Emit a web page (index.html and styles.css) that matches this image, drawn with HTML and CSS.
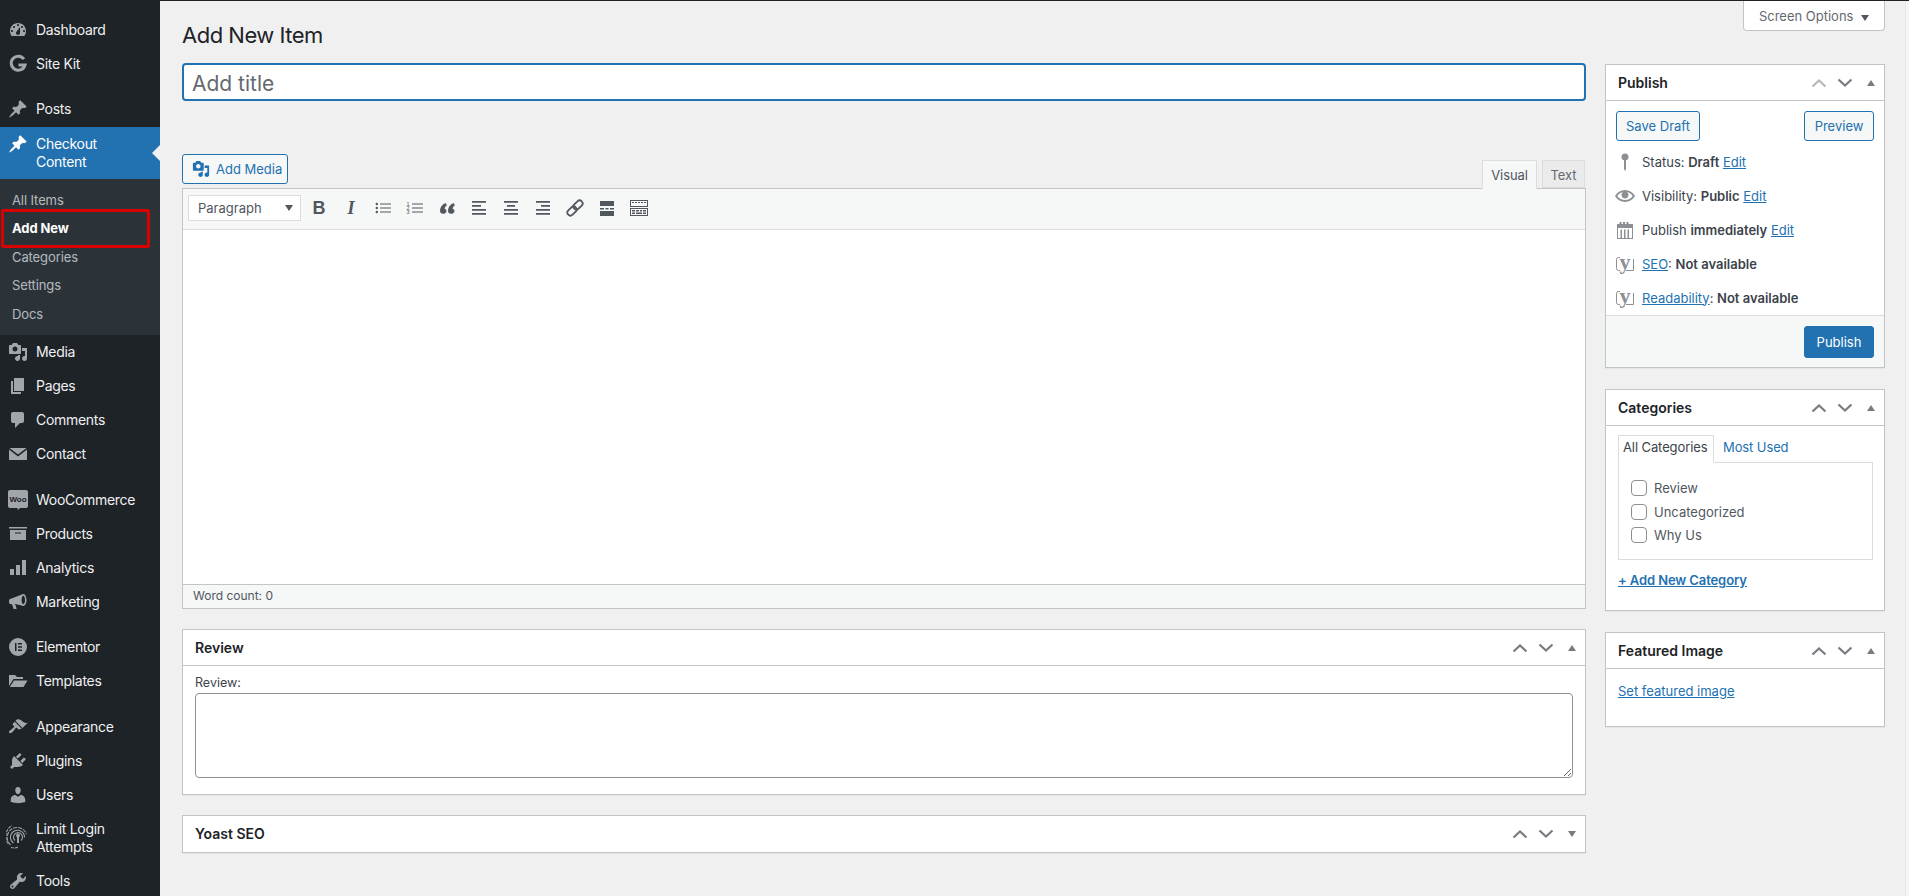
FILE: index.html
```html
<!DOCTYPE html>
<html lang="en">

<head>
    <meta charset="UTF-8">
    <title>Add New Item</title>
    <link rel="stylesheet" href="styles.css">
</head>

<body>
    <svg class="sprite" xmlns="http://www.w3.org/2000/svg">
        <symbol id="i-dashboard" viewBox="0 0 20 20"><path fill-rule="evenodd" d="M3.76 16h12.48c1.1-1.37 1.76-3.11 1.76-5 0-4.42-3.58-8-8-8s-8 3.58-8 8c0 1.89.66 3.63 1.76 5zM10 4c.55 0 1 .45 1 1s-.45 1-1 1-1-.45-1-1 .45-1 1-1zM6 6c.55 0 1 .45 1 1s-.45 1-1 1-1-.45-1-1 .45-1 1-1zm8 0c.55 0 1 .45 1 1s-.45 1-1 1-1-.45-1-1 .45-1 1-1zm-5.37 5.55L12 7v6c0 1.1-.9 2-2 2s-2-.9-2-2c0-.57.24-1.08.63-1.45zM4 10c.55 0 1 .45 1 1s-.45 1-1 1-1-.45-1-1 .45-1 1-1zm12 0c.55 0 1 .45 1 1s-.45 1-1 1-1-.45-1-1 .45-1 1-1z"/></symbol>
        <symbol id="i-google" viewBox="0 0 20 20"><path fill="none" stroke="currentColor" stroke-width="3" d="M16 5.2A7 7 0 1 0 17 11H10.5"/></symbol>
        <symbol id="i-pin" viewBox="0 0 20 20"><path d="M10.44 3.02l1.82-1.82 6.36 6.35-1.83 1.82c-1.05-.68-2.48-.57-3.41.36l-.75.75c-.92.93-1.04 2.35-.35 3.41l-1.83 1.82-2.41-2.41-2.8 2.79c-.42.42-3.38 2.71-3.8 2.29s1.86-3.39 2.28-3.81l2.79-2.79L4.1 9.36l1.83-1.82c1.05.69 2.48.57 3.4-.36l.75-.75c.93-.92 1.05-2.35.36-3.41z"/></symbol>
        <symbol id="i-media" viewBox="0 0 20 20"><path fill-rule="evenodd" d="M13 11V4c0-.55-.45-1-1-1h-1.67L9 1H5L3.67 3H2c-.55 0-1 .45-1 1v7c0 .55.45 1 1 1h10c.55 0 1-.45 1-1zM7 4.5c1.38 0 2.5 1.12 2.5 2.5S8.38 9.5 7 9.5 4.5 8.38 4.5 7 5.62 4.5 7 4.5zM14 6h5v10.5c0 1.38-1.12 2.5-2.5 2.5S14 17.88 14 16.5s1.12-2.5 2.5-2.5c.17 0 .34.02.5.05V9h-3V6zm-4 8.05V13h2v3.5c0 1.38-1.12 2.5-2.5 2.5S7 17.88 7 16.5 8.12 14 9.5 14c.17 0 .34.02.5.05z"/></symbol>
        <symbol id="i-page" viewBox="0 0 20 20"><path d="M6 15V2h10v13H6zm-1 1h8v2H3V5h2v11z"/></symbol>
        <symbol id="i-comment" viewBox="0 0 20 20"><path d="M5 2h9c1.1 0 2 .9 2 2v7c0 1.1-.9 2-2 2h-2l-5 5v-5H5c-1.1 0-2-.9-2-2V4c0-1.1.9-2 2-2z"/></symbol>
        <symbol id="i-mail" viewBox="0 0 20 20"><path d="M1.5 4h17L10 10.5zM1 5.5l9 7 9-7V16H1z"/></symbol>
        <symbol id="i-woo" viewBox="0 0 20 20"><path d="M2 0h16c1.100 0 2 .9 2 2v14c0 1.100-.9 2-2 2h-6l-2 2-.6-2H2c-1.100 0-2-.9-2-2V2c0-1.100.9-2 2-2z"/><text x="10" y="12" class="woo-text">Woo</text></symbol>
        <symbol id="i-archive" viewBox="0 0 20 20"><path fill-rule="evenodd" d="M19 3v1.5H1V3h18zM2 6h16v10H2V6zm11 3.5V8.500H7v1h6z"/></symbol>
        <symbol id="i-chart" viewBox="0 0 20 20"><path d="M18 2v15h-4V2h4zM12 7v10H8V7h4zM6 11v6H2v-6h4z"/></symbol>
        <symbol id="i-megaphone" viewBox="0 0 20 20"><path fill-rule="evenodd" d="M18.500 8c0 3.300-1.400 6-3.200 6-.5 0-1-.2-1.400-.6L7 12v.8c.3 0 .5.2.6.5l1 3.200c.1.300-.1.500-.4.500H6c-.3 0-.5-.2-.6-.4l-1.200-4.200-2-.5C1.500 11.700 1 11 1 10.200V8.800c0-.8.500-1.500 1.200-1.700L13.900 2.600c.4-.4.900-.6 1.400-.6 1.800 0 3.200 2.700 3.200 6zM15.300 3.800c-.9 0-1.700 1.900-1.700 4.200s.8 4.200 1.700 4.200S17 10.300 17 8s-.8-4.200-1.700-4.200z"/></symbol>
        <symbol id="i-elementor" viewBox="0 0 20 20"><path fill-rule="evenodd" d="M10 1a9 9 0 1 1 0 18 9 9 0 0 1 0-18zM7 6v8h1.500V6H7zm3 0v1.500h4V6h-4zm0 3.250v1.500h4v-1.500h-4zM10 12.500V14h4v-1.500h-4z"/></symbol>
        <symbol id="i-folder" viewBox="0 0 20 20"><path d="M1 4h6l2 2h6v2H5.500L1 15V4zM6 9.500h13.500L15.500 16H1.800z"/></symbol>
        <symbol id="i-brush" viewBox="0 0 20 20"><path d="M14.480 11.060L7.410 3.990l1.500-1.500c.5-.56 2.300-.47 3.510.32 1.210.8 1.430 1.280 2.910 2.100 1.180.64 2.450 1.260 4.450.85zm-.71.71L6.700 4.700 4.930 6.470c-.39.39-.39 1.020 0 1.410l1.060 1.060c.39.39.39 1.030 0 1.420-.6.6-1.430 1.110-2.210 1.690-.35.26-.7.53-1.010.84C1.430 13.230.4 14.930 1.300 15.820c.9.900 2.590-.13 3.940-1.480.31-.31.58-.66.85-1.010.58-.78 1.080-1.610 1.690-2.210.39-.39 1.020-.39 1.410 0l1.060 1.060c.39.39 1.020.39 1.410 0z"/></symbol>
        <symbol id="i-plug" viewBox="0 0 20 20"><path d="M13.110 4.360L9.870 7.600 8 5.730l3.240-3.240c.35-.34 1.050-.2 1.560.32.52.51.66 1.210.31 1.550zm-8 1.770l.91-1.120 9.010 9.010-1.190.84c-.71.71-2.630 1.160-3.820 1.160H6.140L4.900 17.260c-.59.59-1.540.59-2.120 0-.59-.58-.59-1.530 0-2.120l1.240-1.240v-3.880c0-1.130.4-3.190 1.090-3.890zm7.260 3.970l3.240-3.240c.34-.35 1.040-.21 1.550.31.52.51.66 1.210.31 1.550l-3.240 3.250z"/></symbol>
        <symbol id="i-user" viewBox="0 0 20 20"><path d="M10 9.250c-2.270 0-2.730-3.440-2.730-3.440C7 4.020 7.820 2 9.970 2c2.160 0 2.980 2.020 2.710 3.810 0 0-.41 3.440-2.680 3.440zm0 2.570L12.720 10c2.390 0 4.520 2.330 4.520 4.530v2.490s-3.650 1.130-7.240 1.130c-3.650 0-7.240-1.130-7.240-1.130v-2.490c0-2.250 1.940-4.480 4.470-4.480z"/></symbol>
        <symbol id="i-limit" viewBox="0 0 22 26"><g fill="none" stroke="currentColor" stroke-width="1.100"><path d="M7.500 20A7 7 0 1 1 18.500 14.500"/><path d="M4.500 22A10 10 0 1 1 20.500 11" stroke-dasharray="4 1"/><path d="M2 20.500A12.500 12.500 0 0 1 6 2.500" stroke-dasharray="3 1"/><path d="M5 24.500c3 .8 5 .6 7-.5" stroke-dasharray="3 1"/><path d="M9 17.500a4.500 4.500 0 1 1 6 0"/></g><path d="M12 10.500a2 2 0 0 1 1 3.700V20h-2v-5.800a2 2 0 0 1 1-3.700z"/></symbol>
        <symbol id="i-tools" viewBox="0 0 20 20"><path fill-rule="evenodd" d="M16.680 9.770c-1.340 1.340-3.300 1.670-4.950.99l-5.410 6.520c-.99.99-2.590.99-3.580 0s-.99-2.590 0-3.570l6.520-5.420c-.68-1.650-.35-3.610.99-4.950 1.280-1.280 3.120-1.620 4.720-1.060l-2.890 2.890 2.820 2.820 2.860-2.870c.53 1.580.18 3.390-1.080 4.650zM3.810 16.210c.4.39 1.040.39 1.430 0 .4-.4.4-1.040 0-1.430-.39-.4-1.030-.4-1.430 0-.39.39-.39 1.030 0 1.430z"/></symbol>
        <symbol id="i-ul" viewBox="0 0 20 20"><path d="M5 6a1.200 1.200 0 1 1-2.400 0A1.200 1.200 0 0 1 5 6zm0 4a1.200 1.200 0 1 1-2.400 0A1.200 1.200 0 0 1 5 10zm0 4a1.200 1.200 0 1 1-2.400 0A1.200 1.200 0 0 1 5 14z"/><path d="M7 5.500h11v1H7zm0 4h11v1H7zm0 4h11v1H7z"/></symbol>
        <symbol id="i-ol" viewBox="0 0 20 20"><text x="1.500" y="7.500" class="ol-text">1</text><text x="1.500" y="11.800" class="ol-text">2</text><text x="1.500" y="16" class="ol-text">3</text><path d="M7 5.500h11v1H7zm0 4h11v1H7zm0 4h11v1H7z"/></symbol>
        <symbol id="i-quote" viewBox="0 0 20 20"><path d="M9.490 13.220c0-1.210-.86-2.220-2-2.450.3-1.400 1.200-2.500 2.340-3.150L8.800 5C5.200 6.500 3 9.200 3 12.800c0 1.800 1.200 3 2.900 3 2 0 3.590-1.100 3.590-2.580zm8 0c0-1.210-.86-2.220-2-2.450.3-1.400 1.200-2.500 2.340-3.150L16.800 5c-3.600 1.500-5.800 4.200-5.800 7.800 0 1.800 1.200 3 2.900 3 2 0 3.590-1.100 3.590-2.580z"/></symbol>
        <symbol id="i-left" viewBox="0 0 20 20"><path d="M3 3h14v1.800H3zm0 4h9v1.800H3zm0 4h14v1.800H3zm0 4h14v1.800H3z"/></symbol>
        <symbol id="i-center" viewBox="0 0 20 20"><path d="M3 3h14v1.800H3zm3 4h8v1.800H6zm-3 4h14v1.800H3zm0 4h14v1.800H3z"/></symbol>
        <symbol id="i-right" viewBox="0 0 20 20"><path d="M3 3h14v1.800H3zm5 4h9v1.800H8zm-5 4h14v1.800H3zm0 4h14v1.800H3z"/></symbol>
        <symbol id="i-link" viewBox="0 0 20 20"><g fill="none" stroke="currentColor" stroke-width="1.800" transform="rotate(-45 10 10)"><rect x="0.500" y="7" width="10.500" height="6" rx="3"/><rect x="9" y="7" width="10.500" height="6" rx="3"/></g></symbol>
        <symbol id="i-more" viewBox="0 0 20 20"><path d="M3 3h14v5H3zm0 7h4v1.500H3zm5.500 0h3v1.500h-3zm4.500 0h4v1.500h-4zM3 13h14v5H3z"/></symbol>
        <symbol id="i-kitchen" viewBox="0 0 20 20"><path fill-rule="evenodd" d="M1 2h18v7H1V2zm1 1v5h16V3H2zm1 1h2v1H3zm3 0h2v1H6zm3 0h2v1H9zm3 0h2v1h-2zm3 0h2v1h-2zM1 10h18v8H1v-8zm1 1v6h16v-6H2zm1 1h3v1.500H3zm4 0h3v1.500H7zm4 0h2v1.500h-2zm3 0h3v1.500h-3zM3 14.500h3V16H3zm4 0h6V16H7zm7 0h3V16h-3z"/></symbol>
        <symbol id="i-eye" viewBox="0 0 20 20"><path fill-rule="evenodd" d="M19.700 9.400C17.700 6 14 3.900 10 3.900S2.300 6 .3 9.400L0 10l.3.6c2 3.400 5.700 5.500 9.700 5.500s7.700-2.100 9.700-5.500l.3-.6-.3-.6zM10 14.100c-3.100 0-6-1.600-7.700-4.100C3.600 8 5.700 6.600 8 6.100c-.9.6-1.500 1.700-1.500 2.900 0 1.900 1.600 3.500 3.500 3.500s3.500-1.600 3.500-3.500c0-1.200-.6-2.300-1.500-2.900 2.300.5 4.400 1.900 5.700 3.900-1.700 2.500-4.600 4.100-7.700 4.100z"/></symbol>
        <symbol id="i-status" viewBox="0 0 20 20"><path d="M10 1.500a3.500 3.500 0 0 1 1 6.860V17l-1 2-1-2V8.360A3.500 3.500 0 0 1 10 1.500z"/></symbol>
        <symbol id="i-calendar" viewBox="0 0 20 20"><path fill-rule="evenodd" d="M2 4h2.500V2h2v2h1.500V2h2v2h1.500V2h2v2H18v15H2V4zm1 4v10h2.500V9.500h1.500V18h2V9.500h1.500V18h2V9.500h1.500V18H17V8H3z"/></symbol>
        <symbol id="i-yoast" viewBox="0 0 20 20"><path fill="none" stroke="currentColor" d="M5 3.500H3.500a2 2 0 0 0-2 2v9a2 2 0 0 0 2 2H5m6 0h7.500V5"/><text x="10" y="14.500" class="yoast-text">y</text></symbol>
        <symbol id="i-up" viewBox="0 0 20 20"><path fill="none" stroke="currentColor" stroke-width="2.200" d="M3.500 13.500L10 7.500l6.500 6"/></symbol>
        <symbol id="i-down" viewBox="0 0 20 20"><path fill="none" stroke="currentColor" stroke-width="2.200" d="M3.500 6.500L10 12.500l6.500-6"/></symbol>
    </svg>

    <div class="page">
        <nav class="sidebar">
            <ul class="menu">
                <li class="item"><svg class="icon"><use href="#i-dashboard"/></svg>Dashboard</li>
                <li class="item"><svg class="icon"><use href="#i-google"/></svg>Site Kit</li>
                <li class="menu-sep"></li>
                <li class="item"><svg class="icon"><use href="#i-pin"/></svg>Posts</li>
                <li class="item item-active"><svg class="icon"><use href="#i-pin"/></svg><span>Checkout<br>Content</span></li>
                <li>
                    <ul class="submenu">
                        <li>All Items</li>
                        <li class="sub-current">Add New</li>
                        <li>Categories</li>
                        <li>Settings</li>
                        <li>Docs</li>
                    </ul>
                </li>
                <li class="item"><svg class="icon"><use href="#i-media"/></svg>Media</li>
                <li class="item"><svg class="icon"><use href="#i-page"/></svg>Pages</li>
                <li class="item"><svg class="icon"><use href="#i-comment"/></svg>Comments</li>
                <li class="item"><svg class="icon"><use href="#i-mail"/></svg>Contact</li>
                <li class="menu-sep menu-sep-wide"></li>
                <li class="item"><svg class="icon"><use href="#i-woo"/></svg>WooCommerce</li>
                <li class="item"><svg class="icon"><use href="#i-archive"/></svg>Products</li>
                <li class="item"><svg class="icon"><use href="#i-chart"/></svg>Analytics</li>
                <li class="item"><svg class="icon"><use href="#i-megaphone"/></svg>Marketing</li>
                <li class="menu-sep"></li>
                <li class="item"><svg class="icon"><use href="#i-elementor"/></svg>Elementor</li>
                <li class="item"><svg class="icon"><use href="#i-folder"/></svg>Templates</li>
                <li class="menu-sep menu-sep-wide"></li>
                <li class="item"><svg class="icon"><use href="#i-brush"/></svg>Appearance</li>
                <li class="item"><svg class="icon"><use href="#i-plug"/></svg>Plugins</li>
                <li class="item"><svg class="icon"><use href="#i-user"/></svg>Users</li>
                <li class="item"><svg class="icon icon-limit"><use href="#i-limit"/></svg><span>Limit Login<br>Attempts</span></li>
                <li class="item"><svg class="icon"><use href="#i-tools"/></svg>Tools</li>
            </ul>
        </nav>

        <main class="content">
            <div class="top-row">
                <h1>Add New Item</h1>
                <button class="screen-options">Screen Options <span class="arrow-down"></span></button>
            </div>

            <div class="columns">
                <div class="col-main">
                    <input class="title-input" type="text" placeholder="Add title">

                    <div class="editor-tools">
                        <button class="btn btn-media"><svg class="btn-icon"><use href="#i-media"/></svg>Add Media</button>
                        <div class="tabs">
                            <span class="tab tab-active">Visual</span>
                            <span class="tab">Text</span>
                        </div>
                    </div>

                    <div class="editor">
                        <div class="toolbar">
                            <div class="format-select">Paragraph <span class="arrow-down"></span></div>
                            <span class="tool tool-bold">B</span>
                            <span class="tool tool-italic">I</span>
                            <svg class="tool"><use href="#i-ul"/></svg>
                            <svg class="tool"><use href="#i-ol"/></svg>
                            <svg class="tool"><use href="#i-quote"/></svg>
                            <svg class="tool"><use href="#i-left"/></svg>
                            <svg class="tool"><use href="#i-center"/></svg>
                            <svg class="tool"><use href="#i-right"/></svg>
                            <svg class="tool"><use href="#i-link"/></svg>
                            <svg class="tool"><use href="#i-more"/></svg>
                            <svg class="tool"><use href="#i-kitchen"/></svg>
                        </div>
                        <div class="editor-body"></div>
                        <div class="editor-status">Word count: 0</div>
                    </div>

                    <section class="box box-review">
                        <header class="box-head">
                            <h2>Review</h2>
                            <div class="handles">
                                <svg class="handle"><use href="#i-up"/></svg>
                                <svg class="handle"><use href="#i-down"/></svg>
                                <span class="handle"><span class="arrow-up"></span></span>
                            </div>
                        </header>
                        <div class="review-body">
                            <label class="review-label">Review:</label>
                            <textarea class="review-text"></textarea>
                        </div>
                    </section>

                    <section class="box box-yoast">
                        <header class="box-head box-head-closed">
                            <h2>Yoast SEO</h2>
                            <div class="handles">
                                <svg class="handle"><use href="#i-up"/></svg>
                                <svg class="handle"><use href="#i-down"/></svg>
                                <span class="handle"><span class="arrow-down"></span></span>
                            </div>
                        </header>
                    </section>
                </div>

                <aside class="col-side">
                    <section class="box">
                        <header class="box-head">
                            <h2>Publish</h2>
                            <div class="handles">
                                <svg class="handle handle-off"><use href="#i-up"/></svg>
                                <svg class="handle"><use href="#i-down"/></svg>
                                <span class="handle"><span class="arrow-up"></span></span>
                            </div>
                        </header>
                        <div class="publish-actions">
                            <button class="btn btn-draft">Save Draft</button>
                            <button class="btn btn-preview">Preview</button>
                        </div>
                        <ul class="publish-rows">
                            <li><svg class="row-icon"><use href="#i-status"/></svg><span>Status: <b>Draft</b> <a href="#">Edit</a></span></li>
                            <li><svg class="row-icon"><use href="#i-eye"/></svg><span>Visibility: <b>Public</b> <a href="#">Edit</a></span></li>
                            <li><svg class="row-icon"><use href="#i-calendar"/></svg><span>Publish <b>immediately</b> <a href="#">Edit</a></span></li>
                            <li><svg class="row-icon"><use href="#i-yoast"/></svg><span><a href="#">SEO</a>: <b>Not available</b></span></li>
                            <li><svg class="row-icon"><use href="#i-yoast"/></svg><span><a href="#">Readability</a>: <b>Not available</b></span></li>
                        </ul>
                        <div class="publish-foot">
                            <button class="btn btn-primary">Publish</button>
                        </div>
                    </section>

                    <section class="box box-cats">
                        <header class="box-head">
                            <h2>Categories</h2>
                            <div class="handles">
                                <svg class="handle"><use href="#i-up"/></svg>
                                <svg class="handle"><use href="#i-down"/></svg>
                                <span class="handle"><span class="arrow-up"></span></span>
                            </div>
                        </header>
                        <div class="cats-body">
                            <div class="cat-tabs">
                                <span class="cat-tab cat-tab-active">All Categories</span>
                                <a class="cat-tab" href="#">Most Used</a>
                            </div>
                            <div class="cat-panel">
                                <label class="cat-row"><input type="checkbox">Review</label>
                                <label class="cat-row"><input type="checkbox">Uncategorized</label>
                                <label class="cat-row"><input type="checkbox">Why Us</label>
                            </div>
                            <a class="cat-add" href="#">+ Add New Category</a>
                        </div>
                    </section>

                    <section class="box box-featured">
                        <header class="box-head">
                            <h2>Featured Image</h2>
                            <div class="handles">
                                <svg class="handle"><use href="#i-up"/></svg>
                                <svg class="handle"><use href="#i-down"/></svg>
                                <span class="handle"><span class="arrow-up"></span></span>
                            </div>
                        </header>
                        <div class="featured-body"><a href="#">Set featured image</a></div>
                    </section>
                </aside>
            </div>
        </main>

        <div class="page-edge"></div>
    </div>
</body>

</html>
```

FILE: styles.css
```css
*,
*::after {
    box-sizing: border-box;
}

html,
body {
    height: 100%;
    margin: 0;
    overflow: hidden;
}

body {
    font-family: Inter, "Liberation Sans", sans-serif;
    font-size: 13px;
    line-height: 18px;
    color: #3c434a;
    background: #f0f0f1;
}

a {
    color: #2271b1;
}

ul {
    list-style: none;
    margin: 0;
    padding: 0;
}

button {
    font: inherit;
}

.sprite {
    display: none;
}

.page {
    display: flex;
    height: 100%;
    border-top: 1px solid #1d2327;
}

/* left admin menu */
.sidebar {
    width: 160px;
    flex: none;
    background: #1d2327;
    padding-top: 12px;
}

.item {
    position: relative;
    display: flex;
    align-items: center;
    padding: 8px 0 8px 8px;
    font-size: 14px;
    letter-spacing: -0.3px;
    color: #f0f0f1;
}

.icon {
    width: 20px;
    height: 20px;
    margin: -1px 8px -1px 0;
    flex: none;
    fill: currentColor;
    color: #a2a6aa;
}

.icon-limit {
    width: 22px;
    height: 26px;
    margin: -9px 8px -5px -2px;
}

.woo-text {
    font-family: "Liberation Sans", sans-serif;
    font-size: 8px;
    font-weight: 700;
    letter-spacing: 0;
    text-anchor: middle;
    fill: #1d2327;
}

.yoast-text {
    font-family: "Liberation Serif", serif;
    font-size: 22px;
    font-weight: 700;
    text-anchor: middle;
}

.menu-sep {
    height: 11px;
}

.menu-sep-wide {
    height: 12px;
}

.item-active {
    background: #2271b1;
    color: #fff;
    align-items: flex-start;
    margin-top: 1px;
}

.item-active .icon {
    color: #fff;
}

.item-active::after {
    content: "";
    position: absolute;
    right: 0;
    top: 18px;
    border: 8px solid transparent;
    border-right-color: #f0f0f1;
    border-left-width: 0;
}

.submenu {
    background: #2c3338;
    padding: 7px 0;
    letter-spacing: -0.1px;
    color: rgba(240, 246, 252, 0.7);
}

.submenu li {
    position: relative;
    height: 28.4px;
    padding: 5px 0 0 12px;
}

.sub-current {
    color: #fff;
    font-weight: 700;
}

.sub-current::after {
    content: "";
    position: absolute;
    left: 1px;
    top: -5px;
    width: 149px;
    height: 39px;
    border: 3px solid #d90000;
    border-radius: 2px;
}

/* main area */
.content {
    flex: 1;
    min-width: 0;
    padding-left: 22px;
    padding-right: 20px;
}

.top-row {
    display: flex;
    justify-content: space-between;
    align-items: flex-start;
    height: 62px;
}

h1 {
    margin: 20px 0 0;
    font-size: 22px;
    line-height: 29px;
    font-weight: 400;
    letter-spacing: -0.5px;
    color: #1d2327;
}

.screen-options {
    width: 142px;
    height: 30px;
    background: #fff;
    border: 1px solid #c3c4c7;
    border-top: none;
    border-radius: 0 0 4px 4px;
    color: #646970;
    padding: 0;
}

.arrow-down,
.arrow-up {
    display: inline-block;
    border-left: 4px solid transparent;
    border-right: 4px solid transparent;
}

.arrow-down {
    border-top: 6px solid #50575e;
    margin-left: 4px;
}

.arrow-up {
    border-bottom: 6px solid #787c82;
}

.columns {
    display: flex;
    gap: 19px;
    align-items: flex-start;
}

.col-main {
    width: 1404px;
    flex: none;
}

.col-side {
    width: 280px;
    flex: none;
    margin-top: 1px;
}

.title-input {
    display: block;
    width: 100%;
    height: 38px;
    padding: 5px 8px 3px;
    border: 2px solid #2271b1;
    border-radius: 4px;
    background: #fff;
    font: 400 21px Inter, "Liberation Sans", sans-serif;
    color: #1d2327;
    outline: none;
}

.title-input::placeholder {
    color: #646970;
}

.btn {
    height: 32px;
    padding: 0;
    background: #f6f7f7;
    border: 1px solid #2271b1;
    border-radius: 3px;
    color: #2271b1;
    white-space: nowrap;
}

.btn-primary {
    background: #2271b1;
    color: #fff;
}

.btn-draft {
    width: 84px;
}

.btn-preview {
    width: 70px;
}

.editor-tools {
    display: flex;
    justify-content: space-between;
    align-items: flex-end;
    margin-top: 53px;
    height: 34px;
}

.btn-media {
    display: flex;
    align-items: center;
    height: 30px;
    width: 106px;
    margin-bottom: 4px;
    padding: 0 0 0 9px;
}

.btn-icon {
    width: 18px;
    height: 18px;
    margin-right: 6px;
    fill: currentColor;
}

.tabs {
    display: flex;
    gap: 5px;
    margin-right: 1px;
    position: relative;
    z-index: 1;
    margin-bottom: -1px;
}

.tab {
    width: 43px;
    height: 28px;
    padding-top: 5px;
    border: 1px solid #dcdcde;
    background: #ebebec;
    color: #646970;
    text-align: center;
    font-size: 13px;
    margin-bottom: 1px;
    letter-spacing: -0.1px;
}

.tab-active {
    width: 55px;
    background: #f6f7f7;
    border-bottom-color: #f6f7f7;
    margin-bottom: 0;
    height: 29px;
    color: #50575e;
}

.editor {
    border: 1px solid #c3c4c7;
    background: #fff;
}

.toolbar {
    display: flex;
    align-items: center;
    gap: 4px;
    height: 41px;
    padding: 0 0 2px 5px;
    background: #f6f7f7;
    border-bottom: 1px solid #dcdcde;
}

.format-select {
    display: flex;
    justify-content: space-between;
    align-items: center;
    width: 113px;
    height: 26px;
    padding: 0 7px 0 9px;
    background: #fff;
    border: 1px solid #dcdcde;
    color: #50575e;
}

.tool {
    width: 28px;
    height: 20px;
    flex: none;
    fill: currentColor;
    color: #50575e;
    text-align: center;
}

.ol-text {
    font-family: "Liberation Sans", sans-serif;
    font-size: 5.500px;
}

.tool-bold {
    font: 700 18px/20px "Liberation Sans", sans-serif;
}

.tool-italic {
    font: italic 700 18px/20px "Liberation Serif", serif;
}

.editor-body {
    height: 354px;
}

.editor-status {
    height: 24px;
    padding: 2px 0 0 10px;
    background: #f6f7f7;
    border-top: 1px solid #c3c4c7;
    font-size: 12px;
    color: #50575e;
}

/* meta boxes */
.box {
    background: #fff;
    border: 1px solid #c3c4c7;
    box-shadow: 0 1px 1px rgba(0, 0, 0, 0.04);
}

.box-head {
    display: flex;
    justify-content: space-between;
    align-items: center;
    height: 36px;
    padding-left: 12px;
    border-bottom: 1px solid #c3c4c7;
}

.box-head-closed {
    border-bottom: none;
}

h2 {
    margin: 0;
    font-size: 14px;
    line-height: 18px;
    font-weight: 600;
    color: #1d2327;
}

.handles {
    display: flex;
    align-items: center;
}

.handle {
    display: flex;
    justify-content: center;
    align-items: center;
    width: 26px;
    height: 20px;
    color: #787c82;
}

.handle .arrow-down {
    border-top-color: #787c82;
    margin: 0;
}

.handle-off {
    color: #b5b8bb;
}

.box-review {
    margin-top: 20px;
}

.review-body {
    padding: 8px 12px 17px;
    height: 128px;
}

.review-label {
    display: block;
    height: 19px;
    font-size: 12.500px;
}

.review-text {
    display: block;
    width: 100%;
    height: 85px;
    border: 1px solid #8c8f94;
    border-radius: 4px;
    background: #fff;
}

.box-yoast {
    margin-top: 20px;
}

.publish-actions {
    display: flex;
    justify-content: space-between;
    padding: 10px 10px 4px;
}

.publish-actions .btn {
    height: 30px;
}

.publish-rows {
    padding-bottom: 1px;
}

.publish-rows li {
    display: flex;
    align-items: center;
    height: 34px;
    padding-left: 9px;
}

.publish-rows li:last-child {
    height: 33px;
}

.publish-rows b {
    font-weight: 600;
}

.row-icon {
    width: 20px;
    height: 20px;
    margin-right: 7px;
    fill: currentColor;
    color: #8c8f94;
}

.publish-foot {
    display: flex;
    justify-content: flex-end;
    height: 52px;
    padding: 10px 10px 0;
    background: #f6f7f7;
    border-top: 1px solid #dcdcde;
}

.publish-foot .btn {
    width: 70px;
}

.box-cats {
    margin-top: 21px;
}

.cats-body {
    height: 184px;
    padding: 9px 12px 0;
}

.cat-tabs {
    display: flex;
    height: 27px;
}

.cat-tab {
    padding: 3px 9px 0;
    text-decoration: none;
    font-size: 13px;
    letter-spacing: -0.1px;
}

.cat-tab-active {
    position: relative;
    width: 96px;
    padding: 2px 4px 0;
    border: 1px solid #dcdcde;
    border-bottom: 1px solid #fff;
    color: #3c434a;
    height: 28px;
    white-space: nowrap;
}

.cat-panel {
    height: 98px;
    margin-right: -1px;
    padding: 13px 12px 0;
    border: 1px solid #dcdcde;
}

.cat-row {
    display: flex;
    align-items: center;
    height: 23.700px;
    color: #50575e;
}

.cat-row input {
    appearance: none;
    width: 16px;
    height: 16px;
    margin: 0 7px 0 0;
    border: 1px solid #8c8f94;
    border-radius: 4px;
    background: #fff;
}

.cat-add {
    display: block;
    margin-top: 11px;
    font-weight: 600;
    letter-spacing: -0.1px;
}

.box-featured {
    margin-top: 21px;
}

.featured-body {
    height: 57px;
    padding: 13px 12px 0;
}

.page-edge {
    width: 4px;
    flex: none;
    background: #f5f5f5;
    border-left: 1px solid #e8e8e8;
}
```
